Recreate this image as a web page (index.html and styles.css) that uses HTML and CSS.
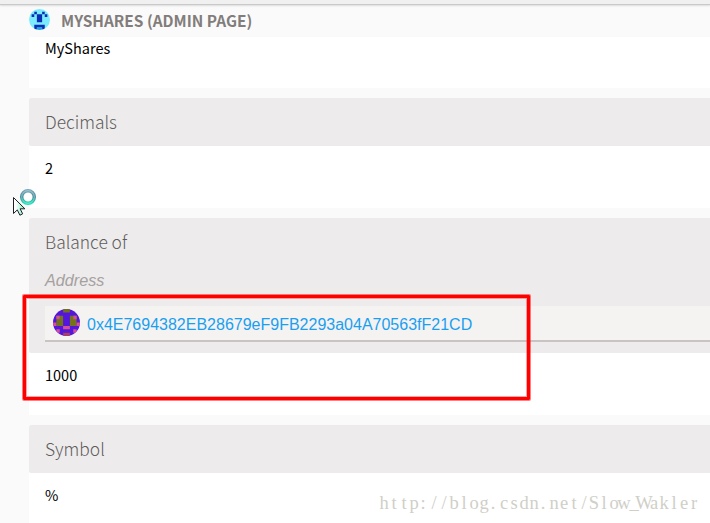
FILE: index.html
```html
<!DOCTYPE html>
<html lang="en">
<head>
    <meta charset="UTF-8">
    <meta name="viewport" content="width=device-width, initial-scale=1.0">
    <title>MyShares (Admin Page)</title>
    <link rel="stylesheet" href="styles.css">
</head>
<body>
    <div class="toolbar"></div>
    <main class="page">
        <header class="contract-header">
            <svg class="identicon" viewBox="0 0 8 8">
                <rect width="8" height="8" fill="#7ceaff"/>
                <path fill="#0b2fb4" d="M2 1h1v1h-1zM5 1h1v1h-1zM1 2h1v1h-1zM6 2h1v1h-1zM3 2h2v3h-2zM2 6h4v1h-4zM2 7h1v1h-1zM5 7h1v1h-1z"/>
                <path fill="#219fe8" d="M3 7h2v1h-2z"/>
            </svg>
            <h1>MyShares (Admin Page)</h1>
        </header>

        <div class="contract-info">
            <section class="row row-first">
                <div class="value">MyShares</div>
            </section>

            <section class="row">
                <div class="name"><h2>Decimals</h2></div>
                <div class="value">2</div>
            </section>

            <section class="row">
                <div class="name name-with-input">
                    <h2>Balance of</h2>
                    <h3>Address</h3>
                    <div class="address-input">
                        <svg class="identicon" viewBox="0 0 8 8">
                            <rect width="8" height="8" fill="#5415dc"/>
                            <path fill="#72731b" d="M3 0h2v1h-2zM1 2h2v3h-2zM5 2h2v3h-2z"/>
                            <path fill="#d65096" d="M1 2h1v1h-1zM6 2h1v1h-1zM0 4h1v1h-1zM7 4h1v1h-1zM3 5h2v1h-2zM1 6h1v1h-1zM6 6h1v1h-1z"/>
                            <path fill="#a93f63" d="M3 7h2v1h-2z"/>
                        </svg>
                        <span>0x4E7694382EB28679eF9FB2293a04A70563fF21CD</span>
                    </div>
                </div>
                <div class="value">1000</div>
            </section>

            <section class="row">
                <div class="name"><h2>Symbol</h2></div>
                <div class="value">%</div>
            </section>
        </div>
    </main>

    <div class="highlight"></div>

    <svg class="cursor" viewBox="0 0 26 30">
        <defs>
            <linearGradient id="ring" x1="0" y1="0" x2="0" y2="1">
                <stop offset="0" stop-color="#78a5b8"/>
                <stop offset=".5" stop-color="#438a98"/>
                <stop offset="1" stop-color="#1be0b8"/>
            </linearGradient>
            <linearGradient id="arrow" x1="0" y1="0" x2="1" y2="0">
                <stop offset=".2" stop-color="#fff"/>
                <stop offset="1" stop-color="#72efbc"/>
            </linearGradient>
        </defs>
        <circle cx="16" cy="9" r="6.3" fill="#fff" stroke="url(#ring)" stroke-width="3.4"/>
        <circle cx="16" cy="9" r="6.3" fill="none" stroke="#d5eff1" stroke-width=".5"/>
        <path d="M1.5 9.5v16l3.8-3.6 2.6 5.3 2.8-1.4-2.6-5h4.8z" fill="url(#arrow)" stroke="#1c2028"/>
    </svg>

    <svg class="watermark" viewBox="0 0 322 26">
        <text y="17" x="6 16 26 36 45 56 66 76 86 96 106 115 126 136 146 156 165 176 186 196 206 216 226 236 246 256 266 276 286 296 306 316">http://blog.csdn.net/Slow_Wakler</text>
    </svg>
</body>
</html>
```
FILE: styles.css
```css
body {
    margin: 0;
    height: 523px;
    overflow: hidden;
    position: relative;
    background: #fafafa;
    color: #000;
    font-family: "Noto Sans CJK SC", "Open Sans", sans-serif;
}
h1, h2, h3 {
    margin: 0;
}
.toolbar {
    box-sizing: border-box;
    height: 5px;
    background: #f0f0f0;
    border-bottom: 1px solid #c9c9c9;
    box-shadow: 0 1px 2px rgba(0, 0, 0, 0.12);
}
.page {
    padding-left: 29px;
}
.identicon {
    display: block;
    flex: none;
    border-radius: 50%;
}
.contract-header {
    display: flex;
    align-items: center;
    gap: 11px;
    height: 32px;
}
.contract-header .identicon {
    width: 21px;
    height: 21px;
    margin-top: -3px;
}
.contract-header h1 {
    margin-top: -2px;
    color: #827d7a;
    font-size: 15.4px;
    font-weight: 700;
    line-height: 32px;
    text-transform: uppercase;
}
.contract-info {
    display: flex;
    flex-direction: column;
    gap: 10px;
}
.row {
    background: #fff;
}
.name {
    height: 48px;
    padding-left: 16px;
    background: #edebeb;
    border-radius: 2px 0 0 2px;
}
.name-with-input {
    height: 135px;
}
.name h2 {
    height: 48px;
    color: #5e5b5b;
    font-size: 17.4px;
    font-weight: 300;
    line-height: 47px;
}
.name h3 {
    color: #a5a1a0;
    font-family: "Liberation Sans", Arial, sans-serif;
    font-size: 16.2px;
    font-style: italic;
    font-weight: 400;
    line-height: 29px;
}
.value {
    box-sizing: border-box;
    height: 62px;
    padding: 10px 16px;
    font-size: 14.5px;
    line-height: 24px;
}
.row-first .value {
    height: 51px;
    padding-top: 0;
    line-height: 22px;
}
.address-input {
    box-sizing: border-box;
    display: flex;
    align-items: center;
    gap: 7px;
    height: 36px;
    margin-top: 11px;
    padding-left: 8px;
    background: #f5f3f2;
    border-bottom: 2px solid #cac3c3;
    color: #1a9ff0;
    font-family: "Liberation Sans", Arial, sans-serif;
    font-size: 16px;
}
.address-input span {
    padding-top: 3px;
}
.address-input .identicon {
    width: 27px;
    height: 27px;
    margin-top: -1px;
}
.highlight {
    position: absolute;
    left: 23px;
    top: 295px;
    box-sizing: border-box;
    width: 507px;
    height: 105px;
    border: 3px solid #fe0000;
    border-radius: 1px;
    box-shadow: 0 0 0 1px rgba(254, 0, 0, 0.5), inset 0 0 0 1px rgba(254, 0, 0, 0.35);
}
.cursor {
    position: absolute;
    left: 12px;
    top: 188px;
    width: 26px;
    height: 30px;
}
.watermark {
    position: absolute;
    left: 378px;
    top: 492px;
    width: 322px;
    height: 26px;
    fill: #cfcfc8;
    font-family: "Liberation Serif", serif;
    font-size: 18.5px;
    text-anchor: middle;
}
```
